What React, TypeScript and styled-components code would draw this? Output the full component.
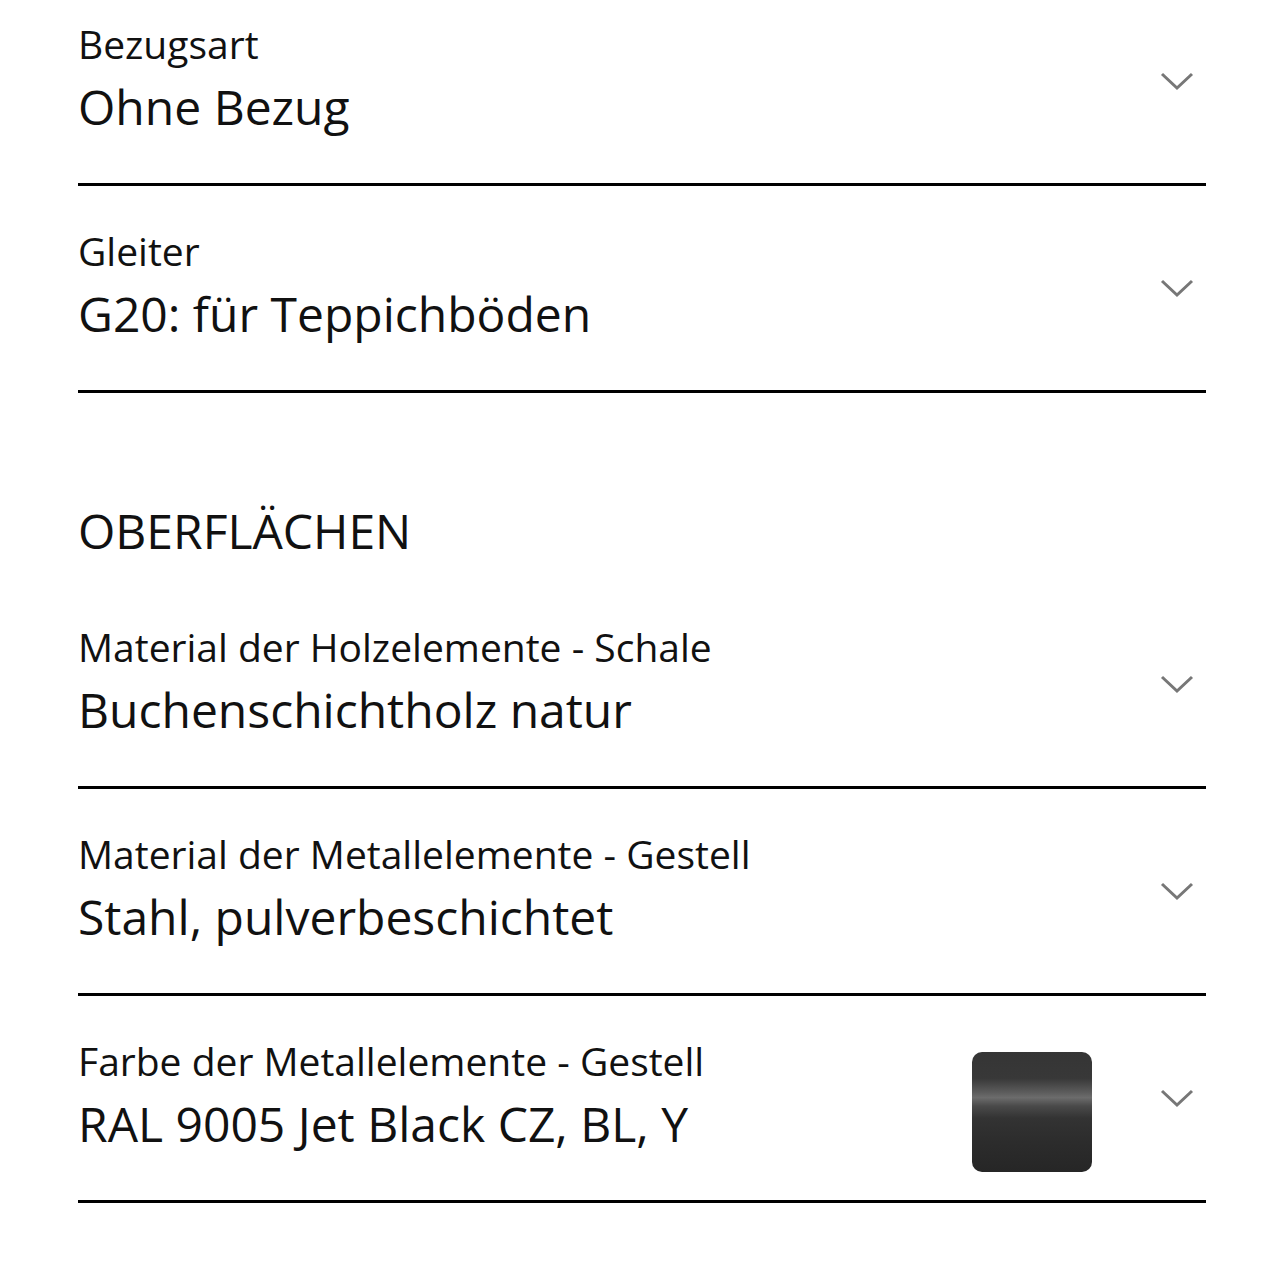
import React from 'react';
import styled, { createGlobalStyle } from 'styled-components';

const GlobalStyle = createGlobalStyle`
  html, body {
    margin: 0;
    padding: 0;
    background: #ffffff;
  }
  body {
    font-family: 'Open Sans', 'Noto Sans', sans-serif;
    color: #111111;
  }
`;

const Page = styled.div`
  width: 1282px;
  padding: 0 76px 0 78px;
  box-sizing: border-box;
`;

const Row = styled.div<{ first?: boolean }>`
  display: flex;
  align-items: stretch;
  height: 207px;
  margin-top: ${({ first }) => (first ? '-21px' : '0')};
  border-bottom: 3px solid #000000;
  box-sizing: border-box;
`;

const TextBlock = styled.div`
  flex: 1;
  display: flex;
  flex-direction: column;
  padding-top: 40px;
`;

const Label = styled.div`
  font-size: 39px;
  line-height: 50px;
  color: #111111;
`;

const Value = styled.div`
  margin-top: 7px;
  font-size: 48px;
  line-height: 62px;
  color: #111111;
`;

const Swatch = styled.div`
  align-self: flex-start;
  margin-top: 56px;
  margin-right: 68px;
  width: 120px;
  height: 120px;
  border-radius: 10px;
  background: linear-gradient(
    180deg,
    #353535 0%,
    #383838 22%,
    #5a5a5a 33%,
    #6c6c6c 38%,
    #4a4a4a 45%,
    #333333 55%,
    #2c2c2c 75%,
    #262626 100%
  );
`;

const ChevronBox = styled.div`
  align-self: flex-start;
  margin-top: 92px;
  margin-right: 12px;
  width: 34px;
  height: 20px;
  display: flex;
  align-items: center;
  justify-content: center;
`;

const SectionTitle = styled.h2`
  margin: 0;
  padding: 108px 0 0;
  height: 189px;
  box-sizing: border-box;
  font-size: 48px;
  line-height: 60px;
  font-weight: 400;
  color: #111111;
`;

const Chevron = () => (
  <ChevronBox>
    <svg width="34" height="20" viewBox="0 0 34 20" fill="none">
      <path d="M2 3 L17 17 L32 3" stroke="#777777" strokeWidth="3" />
    </svg>
  </ChevronBox>
);

type Option = { label: string; value: string; swatch?: boolean };

const top: Option[] = [
  { label: 'Bezugsart', value: 'Ohne Bezug' },
  { label: 'Gleiter', value: 'G20: für Teppichböden' },
];

const surfaces: Option[] = [
  { label: 'Material der Holzelemente - Schale', value: 'Buchenschichtholz natur' },
  { label: 'Material der Metallelemente - Gestell', value: 'Stahl, pulverbeschichtet' },
  { label: 'Farbe der Metallelemente - Gestell', value: 'RAL 9005 Jet Black CZ, BL, Y', swatch: true },
];

const OptionRow = ({ option, first }: { option: Option; first?: boolean }) => (
  <Row first={first}>
    <TextBlock>
      <Label>{option.label}</Label>
      <Value>{option.value}</Value>
    </TextBlock>
    {option.swatch && <Swatch />}
    <Chevron />
  </Row>
);

export default function App() {
  return (
    <Page>
      <GlobalStyle />
      {top.map((o, i) => (
        <OptionRow key={o.label} option={o} first={i === 0} />
      ))}
      <SectionTitle>OBERFLÄCHEN</SectionTitle>
      {surfaces.map((o) => (
        <OptionRow key={o.label} option={o} />
      ))}
    </Page>
  );
}
